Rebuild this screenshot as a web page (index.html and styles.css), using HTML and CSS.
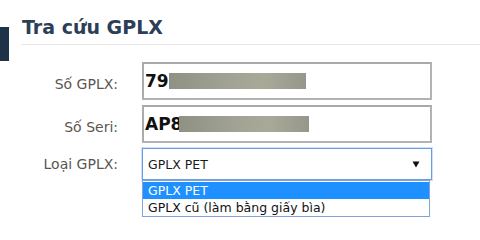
FILE: index.html
```html
<!DOCTYPE html>
<html lang="vi">
<head>
<meta charset="utf-8">
<title>Tra cứu GPLX</title>
<link rel="stylesheet" href="styles.css">
</head>
<body>
<div class="page">
  <div class="side"><div class="side-bar"></div></div>
  <div class="main">
    <h1 class="title">Tra cứu GPLX</h1>
    <div class="form">
      <div class="row">
        <label class="label label-input">Số GPLX:</label>
        <div class="field"><span class="value">79</span><span class="mask mask-gplx"></span></div>
      </div>
      <div class="row">
        <label class="label label-input">Số Seri:</label>
        <div class="field"><span class="value">AP8</span><span class="mask mask-seri"></span></div>
      </div>
      <div class="row">
        <label class="label">Loại GPLX:</label>
        <div class="select-wrap">
          <div class="select">
            <span class="select-text">GPLX PET</span>
            <svg class="arrow" width="8" height="7" viewBox="0 0 8 7"><path d="M0.5 0.5 H7.5 L4 6.5 Z" fill="#111"/></svg>
          </div>
          <ul class="dropdown">
            <li class="option option-active">GPLX PET</li>
            <li class="option">GPLX cũ (làm bằng giấy bìa)</li>
          </ul>
        </div>
      </div>
    </div>
  </div>
</div>
</body>
</html>
```

FILE: styles.css
```css
html, body {
  margin: 0;
  padding: 0;
  background: #ffffff;
}

.page {
  display: flex;
  width: 480px;
  height: 237px;
  overflow: hidden;
  font-family: "DejaVu Sans", Verdana, sans-serif;
}

.side {
  width: 9px;
  flex: none;
  padding-top: 27px;
}

.side-bar {
  width: 9px;
  height: 34px;
  background: #1f3348;
}

.main {
  flex: 1;
  margin-left: 12px;
}

.title {
  margin: 0;
  padding: 15px 0 5px 1px;
  font-size: 19px;
  line-height: 24px;
  font-weight: bold;
  color: #2b4058;
  border-bottom: 1px solid #e7e7e7;
}

.form {
  margin-top: 17px;
  display: flex;
  flex-direction: column;
  gap: 5px;
}

.row {
  display: flex;
  align-items: center;
  gap: 24px;
}

.label {
  width: 97px;
  flex: none;
  text-align: right;
  font-size: 14px;
  color: #5a5550;
}

.label-input {
  padding-top: 5px;
}

.field {
  box-sizing: border-box;
  width: 290px;
  height: 38px;
  border: 2px solid #b3b3b3;
  border-top-color: #a9a9a9;
  border-left-color: #acacac;
  padding-left: 1px;
  display: flex;
  align-items: center;
  background: #fff;
}

.value {
  font-size: 17px;
  font-weight: bold;
  color: #111;
}

.mask {
  display: block;
  height: 16px;
  background: linear-gradient(90deg, #8e9183 0%, #a2a394 45%, #a9a998 70%, #96978a 100%);
}

.mask-gplx {
  width: 137px;
}

.mask-seri {
  width: 130px;
  margin-left: -3px;
}

.select-wrap {
  position: relative;
  width: 290px;
}

.select {
  box-sizing: border-box;
  height: 32px;
  border: 1px solid #6b9be0;
  box-shadow: 0 0 0 1px rgba(120, 165, 235, 0.35);
  display: flex;
  align-items: center;
  justify-content: space-between;
  padding: 0 11px 0 5px;
  font-size: 12.5px;
  color: #1a1a1a;
  background: #fff;
}

.arrow {
  display: block;
}

.dropdown {
  position: absolute;
  top: 100%;
  left: 0;
  box-sizing: border-box;
  width: 288px;
  margin: 0;
  padding: 1px 0 0;
  list-style: none;
  border: 1px solid #7fa3da;
  background: #fff;
}

.option {
  height: 17px;
  line-height: 17px;
  padding-left: 5px;
  font-size: 12.5px;
  color: #111;
}

.option-active {
  background: #1e90ff;
  color: #ffffff;
}
```
